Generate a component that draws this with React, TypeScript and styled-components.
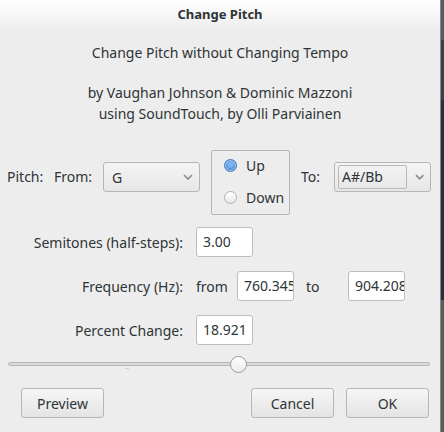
import React from "react";
import styled, { createGlobalStyle } from "styled-components";

const Global = createGlobalStyle`
  html, body { margin: 0; padding: 0; background: #3b3b45; }
  body { font-family: "Noto Sans", "DejaVu Sans", sans-serif; font-size: 14px; color: #2e3436; }
  * { box-sizing: border-box; }
`;

const Screen = styled.div`
  display: flex;
  width: 444px;
  height: 432px;
`;

const Dialog = styled.div`
  width: 441px;
  height: 432px;
  background: #ededed;
  border-right: 1px solid #8a8a8a;
  display: flex;
  flex-direction: column;
`;

const Backdrop = styled.div`
  flex: 1;
  background: linear-gradient(#5a5a64 0 40px, #3f3f4a 40px 100px, #2c2c3a 100px 300px, #5b5b5b 300px);
`;

const TitleBar = styled.div`
  height: 30px;
  padding-top: 4px;
  background: linear-gradient(#ffffff, #ededed);
  text-align: center;
  font-weight: bold;
  font-size: 13px;
  line-height: 20px;
`;

const Centered = styled.div<{ $top: number }>`
  margin-top: ${(p) => p.$top}px;
  text-align: center;
  line-height: 21px;
`;

const PitchRow = styled.div`
  display: flex;
  align-items: flex-start;
  gap: 11px;
  margin-top: 26px;
  padding-left: 7px;
  height: 65px;
`;

const Label = styled.span<{ $w?: number; $top?: number }>`
  display: inline-block;
  width: ${(p) => (p.$w ? `${p.$w}px` : "auto")};
  margin-top: ${(p) => p.$top ?? 0}px;
  line-height: 30px;
  white-space: nowrap;
`;

const Combo = styled.div`
  margin-top: 12px;
  width: 97px;
  height: 30px;
  border: 1px solid #b6b6b3;
  border-radius: 3px;
  background: linear-gradient(#f4f4f4, #e6e6e6);
  display: flex;
  align-items: center;
  padding: 0 6px 0 8px;
`;

const ComboText = styled.span`
  flex: 1;
`;

const ComboEntry = styled.div`
  margin-left: -5px;
  width: 73px;
  height: 24px;
  border: 1px solid #b8b8b6;
  border-radius: 2px;
  padding-left: 3px;
  line-height: 22px;
  margin-right: 8px;
`;

const Chevron = () => (
  <svg width="10" height="6" viewBox="0 0 10 6">
    <path d="M1 1 L5 5 L9 1" fill="none" stroke="#8a8c8a" strokeWidth="1.6" />
  </svg>
);

const RadioBox = styled.div`
  width: 79px;
  height: 65px;
  border: 1px solid #b6b6b3;
  border-radius: 2px;
  padding: 0 0 0 12px;
  display: flex;
  flex-direction: column;
  gap: 4px;
`;

const RadioLine = styled.div`
  display: flex;
  align-items: center;
  gap: 9px;
  height: 28px;
`;

const RadioDot = styled.span<{ $on?: boolean }>`
  width: 13px;
  height: 13px;
  border-radius: 50%;
  border: 1px solid ${(p) => (p.$on ? "#3d72b8" : "#b0b0ae")};
  background: ${(p) =>
    p.$on
      ? "radial-gradient(circle at 50% 40%, #7db3f0 0 25%, #4a8ee0 60%, #3b79c9 100%)"
      : "linear-gradient(#ffffff, #e8e8e8)"};
  box-shadow: ${(p) => (p.$on ? "inset 0 0 0 1px #a9c9f0" : "none")};
`;

const FieldGrid = styled.div`
  display: grid;
  grid-template-columns: 183px auto;
  column-gap: 13px;
  row-gap: 14px;
  margin-top: 12px;
  align-items: center;
`;

const RightLabel = styled.span`
  text-align: right;
  white-space: nowrap;
`;

const Entry = styled.div`
  width: 57px;
  height: 30px;
  border: 1px solid #bdbdbb;
  border-radius: 3px;
  background: #ffffff;
  padding-left: 6px;
  line-height: 28px;
  overflow: hidden;
  white-space: nowrap;
`;

const FreqLine = styled.div`
  display: flex;
  align-items: center;
`;

const Word = styled.span<{ $w: number }>`
  width: ${(p) => p.$w}px;
  white-space: nowrap;
`;

const SliderWrap = styled.div`
  margin: 11px 0 0 8px;
  width: 422px;
  height: 16px;
  position: relative;
  display: flex;
  align-items: center;
`;

const Track = styled.div`
  width: 100%;
  height: 4px;
  border: 1px solid #b8b8b6;
  border-radius: 2px;
  background: #dadad9;
`;

const Thumb = styled.div`
  position: absolute;
  left: 222px;
  top: 0;
  width: 17px;
  height: 17px;
  border-radius: 50%;
  border: 1px solid #9a9a98;
  background: linear-gradient(#ffffff, #ececec);
`;

const Tick = styled.div`
  position: absolute;
  left: 117px;
  top: 12px;
  width: 4px;
  height: 1px;
  background: #cfcfcf;
`;

const ButtonRow = styled.div`
  display: flex;
  margin-top: 16px;
  padding: 0 11px 0 21px;
  gap: 12px;
`;

const Spacer = styled.div`
  flex: 1;
`;

const Button = styled.button`
  width: 83px;
  height: 30px;
  border: 1px solid #b6b6b3;
  border-radius: 3px;
  background: linear-gradient(#f6f6f6, #e4e4e4);
  font-family: inherit;
  font-size: 14px;
  color: #2e3436;
  padding: 0;
`;

export default function App() {
  return (
    <Screen>
      <Global />
      <Dialog>
        <TitleBar>Change Pitch</TitleBar>
        <Centered $top={12}>Change Pitch without Changing Tempo</Centered>
        <Centered $top={19}>
          by Vaughan Johnson &amp; Dominic Mazzoni
          <br />
          using SoundTouch, by Olli Parviainen
        </Centered>
        <PitchRow>
          <Label $w={36} $top={12}>Pitch:</Label>
          <Label $w={38} $top={12}>From:</Label>
          <Combo>
            <ComboText>G</ComboText>
            <Chevron />
          </Combo>
          <RadioBox>
            <RadioLine>
              <RadioDot $on />
              Up
            </RadioLine>
            <RadioLine>
              <RadioDot />
              Down
            </RadioLine>
          </RadioBox>
          <Label $w={22} $top={12}>To:</Label>
          <Combo>
            <ComboEntry>A#/Bb</ComboEntry>
            <Chevron />
          </Combo>
        </PitchRow>
        <FieldGrid>
          <RightLabel>Semitones (half-steps):</RightLabel>
          <Entry>3.00</Entry>
          <RightLabel>Frequency (Hz):</RightLabel>
          <FreqLine>
            <Word $w={41}>from</Word>
            <Entry>760.345</Entry>
            <Word $w={12} />
            <Word $w={42}>to</Word>
            <Entry>904.208</Entry>
          </FreqLine>
          <RightLabel>Percent Change:</RightLabel>
          <Entry>18.921</Entry>
        </FieldGrid>
        <SliderWrap>
          <Track />
          <Tick />
          <Thumb />
        </SliderWrap>
        <ButtonRow>
          <Button>Preview</Button>
          <Spacer />
          <Button>Cancel</Button>
          <Button>OK</Button>
        </ButtonRow>
      </Dialog>
      <Backdrop />
    </Screen>
  );
}
